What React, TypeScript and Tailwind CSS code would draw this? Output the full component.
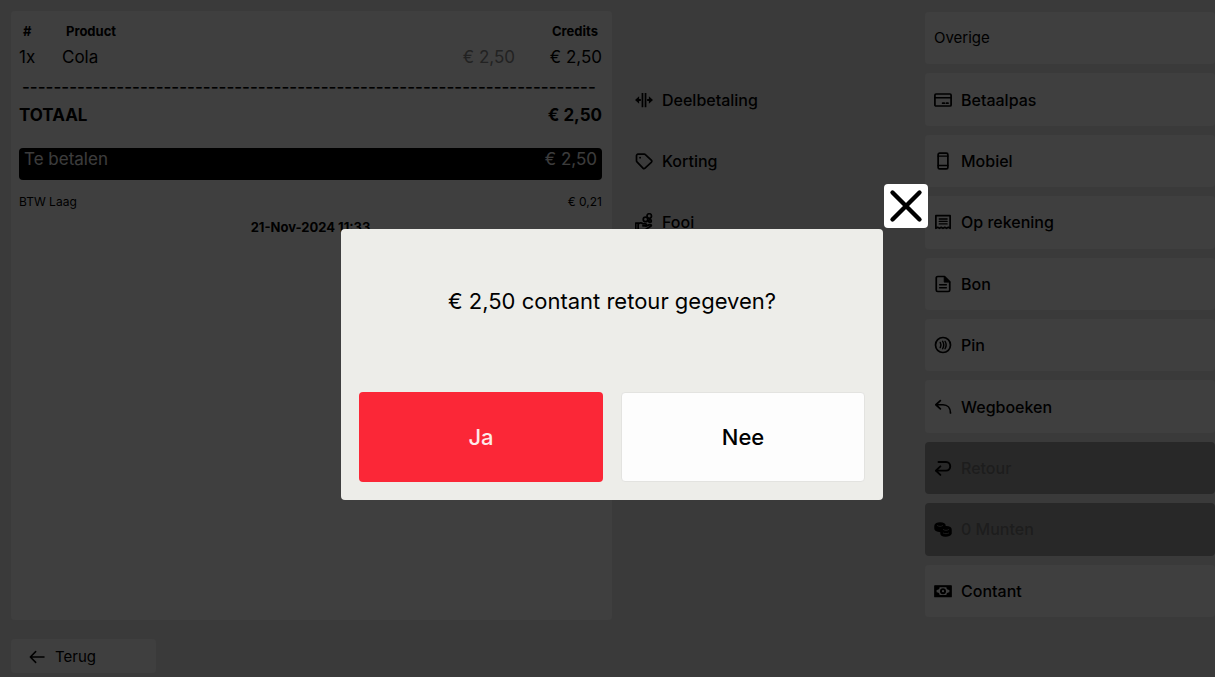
import React from "react";

type IconName =
  | "split" | "tag" | "tip" | "card" | "phone" | "bill" | "doc"
  | "contactless" | "reply" | "return" | "coins" | "cash" | "back" | "close";

const drawings: Record<IconName, React.ReactNode> = {
  split: (
    <g fill="currentColor" stroke="none">
      <path d="M8.800 2.500h2.300v19H8.800zM12.900 2.500h2.300v19h-2.300zM0 12l5.500-5V10.700h2.300v2.600H5.500V17zM24 12l-5.500-5V10.700h-2.300v2.600h2.300V17z" />
    </g>
  ),
  tag: (
    <>
      <path d="M2 5.200v6.500c0 .6.2 1.100.6 1.500l8 8.200c.8.8 2 .8 2.800 0l8.300-7.700c.8-.8.8-2 0-2.800l-7.900-7.400a2 2 0 0 0-1.500-.6L4 2.900a2.100 2.100 0 0 0-2 2.300z" />
      <circle cx="6.800" cy="7.500" r="1.300" fill="currentColor" stroke="none" />
    </>
  ),
  tip: (
    <>
      <path d="M1 13.500h3.200V22H1zM4.500 14.500c2-1.600 4.500-1.600 6 0h3.500c1.600 0 1.600 2.600 0 2.600h-3.500M14.500 17.500l5-2c2-.6 3 1.200 1.500 2.300L14 22H4.500" />
      <circle cx="14" cy="8.500" r="3" />
      <circle cx="19" cy="4" r="3" />
      <circle cx="20" cy="10.500" r="1.800" />
    </>
  ),
  card: (
    <>
      <rect x="1.200" y="4" width="21.600" height="16" rx="1.500" />
      <path d="M1.500 9h21" />
      <path d="M11.500 16.300h2.200M16.500 16.300h2.200" />
    </>
  ),
  phone: (
    <>
      <rect x="5.500" y="1.500" width="13" height="21" rx="2" />
      <path d="M5.500 5.500h13M5.500 18h13" strokeWidth="1.800" />
    </>
  ),
  bill: (
    <>
      <path d="M2.500 3.500h19v17l-2.400-1.400-2.400 1.400-2.300-1.400-2.400 1.400-2.400-1.400-2.300 1.400-2.400-1.400-2.400 1.400z" />
      <path d="M7 8h10.500M7 11.300h10.500M7 14.600h10.500" strokeWidth="1.700" />
    </>
  ),
  doc: (
    <>
      <path d="M14 2H5a2 2 0 0 0-2 2v16a2 2 0 0 0 2 2h14a2 2 0 0 0 2-2V9z" />
      <path d="M13.500 2v7.500H21z" fill="currentColor" strokeWidth="1" />
      <path d="M7.500 13h9M7.500 17h9" strokeWidth="1.800" />
    </>
  ),
  contactless: (
    <>
      <circle cx="12" cy="12" r="10" />
      <path d="M8.300 8.500c1.300 2.200 1.300 4.800 0 7M11.500 7c1.900 3.100 1.900 6.900 0 10M14.700 7c1.900 3.100 1.900 6.900 0 10" strokeWidth="1.900" />
    </>
  ),
  reply: <path d="M8.500 3.500L2.500 9l6 5.500M2.500 9H12c6 0 10 4.500 10 11" />,
  return: <path d="M6 4H16c7.500 0 7.500 11.500 0 11.500H2.500M8.500 9.800l-6 5.700 6 5.700" strokeWidth="2.600" />,
  coins: (
    <>
      <path d="M1.500 8c0-5 13-5 13 0v4.500c-3 4-13 3-13-1.500z" fill="currentColor" />
      <path d="M9.500 13c0-5 13-5 13 0v5c-2.500 4.500-13 4-13-.5z" fill="currentColor" />
      <path d="M4.500 7.500c2 1.500 5 1.500 7 0M12.500 12.800c2 1.500 5 1.500 7 0M12.500 17.500c2 1 5 1 7 0" stroke="#777" strokeWidth="1.200" />
    </>
  ),
  cash: (
    <>
      <path d="M1 5h22v14.500H1z" fill="currentColor" strokeWidth="1.500" />
      <path d="M7.500 7h9c0 2.300 1.500 3.700 4 3.700v2.900c-2.500 0-4 1.400-4 3.700h-9c0-2.300-1.500-3.700-4-3.700v-2.900c2.500 0 4-1.400 4-3.700z" fill="#fbfbfb" stroke="none" />
      <circle cx="12" cy="12.200" r="4" fill="currentColor" stroke="none" />
      <circle cx="12" cy="12.200" r="1.500" fill="#fbfbfb" stroke="none" />
    </>
  ),
  back: <path d="M10 4l-8 8 8 8M2 12h20.500" />,
  close: <path d="M3 3l18 18M21 3l-18 18" strokeWidth="2.900" />,
};

function Icon({ name, className }: { name: IconName; className: string }) {
  return (
    <svg viewBox="0 0 24 24" fill="none" stroke="currentColor" strokeWidth="2.300" strokeLinecap="round" strokeLinejoin="round" aria-hidden="true" className={`shrink-0 ${className}`}>
      {drawings[name]}
    </svg>
  );
}

type Action = { label: string; icon: IconName; disabled?: boolean };

const adjustments: Action[] = [
  { label: "Deelbetaling", icon: "split" },
  { label: "Korting", icon: "tag" },
  { label: "Fooi", icon: "tip" },
];

const payments: Action[] = [
  { label: "Betaalpas", icon: "card" },
  { label: "Mobiel", icon: "phone" },
  { label: "Op rekening", icon: "bill" },
  { label: "Bon", icon: "doc" },
  { label: "Pin", icon: "contactless" },
  { label: "Wegboeken", icon: "reply" },
  { label: "Retour", icon: "return", disabled: true },
  { label: "0 Munten", icon: "coins", disabled: true },
  { label: "Contant", icon: "cash" },
];

function ActionButton({ action, plain }: { action: Action; plain?: boolean }) {
  const surface = plain ? "" : action.disabled ? "bg-[#a0a0a0]" : "bg-[#f9f9f9]";
  return (
    <button type="button" disabled={action.disabled} className={`flex items-center gap-[9px] rounded px-[9px] text-left text-base font-medium ${surface}`}>
      <Icon name={action.icon} className="size-[18px]" />
      <span className={action.disabled ? "text-[#747474]" : ""}>{action.label}</span>
    </button>
  );
}

function Receipt() {
  return (
    <section className="flex flex-col rounded-sm bg-[#f9f9f9] pl-2 pr-[10px] pt-2 text-[17px] leading-6">
      <table className="w-full">
        <thead className="text-[13px] font-bold leading-6">
          <tr>
            <th className="w-[43px] pl-1 text-left">#</th>
            <th className="pl-1 text-left">Product</th>
            <th></th>
            <th className="w-[87px] pr-1 text-right">Credits</th>
          </tr>
        </thead>
        <tbody>
          <tr className="leading-7">
            <td>1x</td>
            <td>Cola</td>
            <td className="text-right text-[#888]">€ 2,50</td>
            <td className="text-right">€ 2,50</td>
          </tr>
        </tbody>
      </table>
      <div aria-hidden="true" className="mt-1 overflow-hidden whitespace-nowrap pl-[3px] font-medium">{"-".repeat(73)}</div>
      <div className="mt-1 flex justify-between font-bold">
        <span>TOTAAL</span>
        <span>€ 2,50</span>
      </div>
      <div className="mt-[21px] flex h-8 justify-between rounded bg-black px-[5px] leading-[22px] text-[#eee]">
        <span>Te betalen</span>
        <span>€ 2,50</span>
      </div>
      <div className="mt-3 flex justify-between text-[12px] leading-5">
        <span>BTW Laag</span>
        <span>€ 0,21</span>
      </div>
      <p className="mt-[5px] text-center text-[13px] font-bold leading-5">21-Nov-2024 11:33</p>
    </section>
  );
}

function ConfirmDialog() {
  return (
    <div className="fixed inset-0 flex items-start justify-center bg-black/75 pl-[9px] pt-[229px]">
      <div role="dialog" aria-modal="true" aria-labelledby="question" className="relative w-[542px] max-w-full rounded bg-[#edede9] px-[18px] pb-[18px] text-[22px]">
        <button type="button" aria-label="Sluiten" className="absolute -right-[45px] -top-[45px] flex size-11 items-center justify-center rounded bg-white">
          <Icon name="close" className="size-9" />
        </button>
        <p id="question" className="pb-[75px] pt-14 text-center leading-8">€ 2,50 contant retour gegeven?</p>
        <div className="grid grid-cols-2 gap-[18px] font-medium">
          <button type="button" className="h-[90px] rounded bg-[#fb2737] text-[#fdebea]">Ja</button>
          <button type="button" className="h-[90px] rounded border border-[#e3e3e0] bg-[#fdfdfd]">Nee</button>
        </div>
      </div>
    </div>
  );
}

export default function App() {
  return (
    <div className="flex min-h-screen flex-col bg-[#e8e8e8] pb-1 pl-[11px] pt-[11px] font-['Inter',sans-serif] text-black">
      <main className="grid flex-1 grid-cols-[601fr_285fr_290fr] gap-[14px]">
        <Receipt />
        <div className="grid grid-rows-[repeat(10,minmax(0,1fr))] gap-[9px] pb-[3px] pt-px">
          <div />
          {adjustments.map((a) => <ActionButton key={a.label} action={a} plain />)}
        </div>
        <div className="grid grid-rows-[repeat(10,minmax(0,1fr))] gap-[9px] pb-[3px] pt-px">
          <button type="button" className="rounded bg-[#f9f9f9] px-[9px] text-left text-[15px]">Overige</button>
          {payments.map((a) => <ActionButton key={a.label} action={a} />)}
        </div>
      </main>
      <footer className="mt-[19px]">
        <button type="button" className="flex h-[34px] w-[145px] items-center gap-[10px] rounded-sm bg-[#f9f9f9] px-[18px] pt-0.5 text-[15px]">
          <Icon name="back" className="size-4" />
          Terug
        </button>
      </footer>
      <ConfirmDialog />
    </div>
  );
}
